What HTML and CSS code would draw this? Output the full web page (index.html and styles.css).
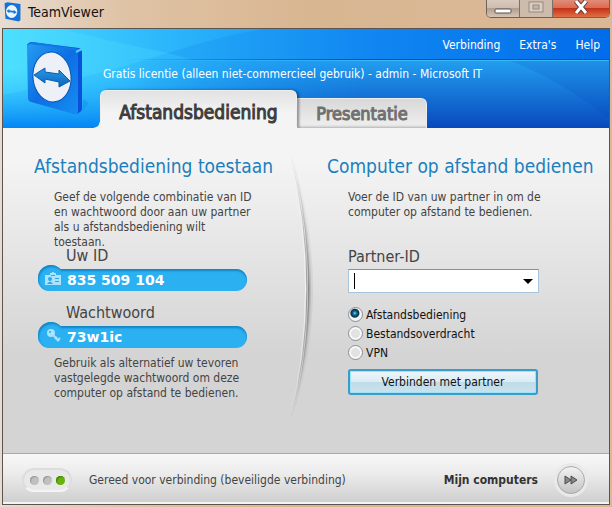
FILE: index.html
```
<!DOCTYPE html>
<html lang="nl">
<head>
    <meta charset="UTF-8">
    <title>TeamViewer</title>
    <link rel="stylesheet" href="styles.css">
</head>
<body>
    <div class="titlebar">
        <svg class="title-icon" viewBox="0 0 60 78" preserveAspectRatio="none">
            <path d="M2 5 L12 1 L58 8 V70 L52 76 L5 65 Z" fill="#1273dd"/>
            <ellipse cx="27" cy="37" rx="20" ry="25" fill="#eef4fb"/>
            <path d="M9 35 L19 27 V32 L34 35 V30 L45 41 L34 47 V42 L19 39 V44 Z" fill="#1779d0"/>
        </svg>
        <span class="title-text">TeamViewer</span>
        <div class="window-buttons">
            <button class="win-btn minimize" aria-label="Minimaliseren">
                <svg width="18" height="6"><rect x="1" y="1" width="16" height="4" rx="1" fill="#fff" stroke="#5b5250"/></svg>
            </button>
            <button class="win-btn maximize" aria-label="Maximaliseren" disabled>
                <svg width="16" height="12"><rect x="1" y="1" width="14" height="10" fill="#d9cdc2" stroke="#978a7f"/><rect x="5" y="4" width="6" height="4" fill="#c4b4a6" stroke="#978a7f"/></svg>
            </button>
            <button class="win-btn close" aria-label="Sluiten">
                <svg width="16" height="14"><path d="M3 1 L13 13 M13 1 L3 13" stroke="#5e3a38" stroke-width="5"/><path d="M3 1 L13 13 M13 1 L3 13" stroke="#fff" stroke-width="3"/></svg>
            </button>
        </div>
    </div>

    <div class="app">
        <header class="header">
            <svg class="header-bg" viewBox="0 0 606 99" preserveAspectRatio="none">
                <defs>
                    <linearGradient id="top-blue" x1="0" x2="1">
                        <stop offset="0" stop-color="#4bddff"/>
                        <stop offset=".28" stop-color="#2bb5fb"/>
                        <stop offset=".6" stop-color="#138af5"/>
                        <stop offset="1" stop-color="#0069ec"/>
                    </linearGradient>
                    <linearGradient id="low-blue" x1="0" x2="0" y1="0" y2="1">
                        <stop offset="0" stop-color="#239ff0"/>
                        <stop offset="1" stop-color="#0849bd"/>
                    </linearGradient>
                    <linearGradient id="low-left" x1="0" x2="0" y1="0" y2="1">
                        <stop offset="0" stop-color="#20adfa" stop-opacity="0"/>
                        <stop offset="1" stop-color="#0385f5"/>
                    </linearGradient>
                    <linearGradient id="fade" x1="0" x2="1">
                        <stop offset=".2" stop-color="#fff" stop-opacity="0"/>
                        <stop offset=".6" stop-color="#fff"/>
                    </linearGradient>
                    <mask id="fade-mask"><rect width="606" height="99" fill="url(#fade)"/></mask>
                </defs>
                <rect width="606" height="99" fill="url(#top-blue)"/>
                <rect y="40" width="606" height="59" fill="url(#low-left)"/>
                <path d="M0 0 H60 Q105 12 165 24 Q90 48 0 66 Z" fill="#5cecff" opacity=".2"/>
                <path d="M165 24 Q215 8 260 0 H606 V31 H190 Z" fill="#087be8" opacity=".2"/>
                <g mask="url(#fade-mask)">
                    <rect y="31" width="606" height="68" fill="url(#low-blue)"/>
                    <path d="M505 31 Q560 52 606 90 V31 Z" fill="#003bb4" opacity=".12"/>
                    <rect y="30" width="606" height="1" fill="#0048cf"/>
                    <rect y="31" width="606" height="1" fill="#37b8f7"/>
                </g>
            </svg>
            <svg class="logo" viewBox="0 0 66 80">
                <defs>
                    <linearGradient id="logo-face" x1="0" x2="1" y1="0" y2="1">
                        <stop offset="0" stop-color="#259cf0"/>
                        <stop offset=".5" stop-color="#0c6fe4"/>
                        <stop offset="1" stop-color="#168ef2"/>
                    </linearGradient>
                    <linearGradient id="logo-arrow" x1="0" x2="0" y1="0" y2="1">
                        <stop offset="0" stop-color="#2c98e4"/>
                        <stop offset="1" stop-color="#0965bf"/>
                    </linearGradient>
                </defs>
                <path d="M54 73 L57 69 V58 L63 62 Z" fill="#0967ba" opacity=".2"/>
                <path d="M1 5 Q1 2 5 1 L53 7 Q56 8 56 11 V68 Q56 70 54 71 L51 73 L47 73 Z" fill="#0a50dd"/>
                <path d="M2 3 L7 1 L54 8 L51 11 Z" fill="#1478e6"/>
                <path d="M1 6 Q1 3 4 3 L49 9 Q52 10 52 13 V70 Q52 74 48 73 L5 61 Q2 60 2 57 Z" fill="url(#logo-face)"/>
                <path d="M50 11 L56 8" stroke="#45d1ff" stroke-width="2"/>
                <ellipse cx="26" cy="36" rx="19" ry="25" transform="rotate(-6 26 36)" fill="#edf0f7" stroke="#0755b6"/>
                <path d="M8 34 L19 27 V31 L33 33 V29 L44 40 L33 46 V41 L19 38 V42 Z" fill="url(#logo-arrow)" stroke="#075eae"/>
            </svg>
            <nav class="menu">
                <a href="#">Verbinding</a>
                <a href="#">Extra's</a>
                <a href="#">Help</a>
            </nav>
            <p class="license">Gratis licentie (alleen niet-commercieel gebruik) - admin - Microsoft IT</p>
            <div class="tabs">
                <button class="tab active">Afstandsbediening</button>
                <button class="tab">Presentatie</button>
            </div>
        </header>

        <main class="content">
            <section class="panel allow">
                <h2>Afstandsbediening toestaan</h2>
                <p class="intro">Geef de volgende combinatie van ID<br>en wachtwoord door aan uw partner<br>als u afstandsbediening wilt<br>toestaan.</p>
                <div class="field-label">Uw ID</div>
                <div class="pill">
                    <svg class="pill-icon" viewBox="0 0 16 14">
                        <path d="M0 3 H5 V1 H7 V0 H9 V1 H11 V3 H16 V13 H0 Z" fill="#a8e3ff"/>
                        <circle cx="5" cy="7" r="2" fill="#32a6e8"/>
                        <path d="M2 12 Q5 7 8 12 Z M10 6 H14 V7 H10 Z M10 9 H14 V10 H10 Z M6 3 H10 V4 H6 Z" fill="#32a6e8"/>
                    </svg>
                    <span>835 509 104</span>
                </div>
                <div class="field-label">Wachtwoord</div>
                <div class="pill">
                    <svg class="pill-icon" viewBox="0 0 16 14">
                        <circle cx="6" cy="4" r="4" fill="#a8e3ff"/>
                        <circle cx="5" cy="3" r="1" fill="#32a6e8"/>
                        <path d="M8 6 L14 12 M10 10 L12 8 M12 12 L15 9" stroke="#a8e3ff" stroke-width="2"/>
                    </svg>
                    <span>73w1ic</span>
                </div>
                <p class="note">Gebruik als alternatief uw tevoren<br>vastgelegde wachtwoord om deze<br>computer op afstand te bedienen.</p>
            </section>

            <svg class="divider" viewBox="0 0 30 270" preserveAspectRatio="none">
                <defs>
                    <linearGradient id="arc-fade" x1="0" x2="0" y1="0" y2="1">
                        <stop offset="0" stop-color="#fff" stop-opacity="0"/>
                        <stop offset=".3" stop-color="#fff" stop-opacity=".6"/>
                        <stop offset=".52" stop-color="#fff"/>
                        <stop offset=".75" stop-color="#fff" stop-opacity=".6"/>
                        <stop offset="1" stop-color="#fff" stop-opacity="0"/>
                    </linearGradient>
                    <mask id="arc-mask" maskUnits="userSpaceOnUse" x="0" y="0" width="30" height="270">
                        <rect width="30" height="270" fill="url(#arc-fade)"/>
                    </mask>
                </defs>
                <g fill="none" mask="url(#arc-mask)">
                    <path d="M3 0 Q37 138 3 270 Q47 138 3 0" fill="#555" opacity=".1"/>
                    <path d="M3 0 Q37 138 3 270 Q43 138 3 0" fill="#555" opacity=".2"/>
                    <path d="M3 0 Q37 138 3 270 Q40 138 3 0" fill="#444" opacity=".4"/>
                    <path d="M2 0 Q36 138 2 270" stroke="#666" opacity=".6"/>
                    <path d="M1 0 Q34 138 1 270" stroke="#fff" opacity=".6"/>
                </g>
            </svg>

            <section class="panel control">
                <h2>Computer op afstand bedienen</h2>
                <p class="intro">Voer de ID van uw partner in om de<br>computer op afstand te bedienen.</p>
                <label class="field-label" for="partner-id">Partner-ID</label>
                <div class="combo">
                    <input type="text" id="partner-id">
                    <button class="combo-arrow" aria-label="Eerdere ID's">
                        <svg width="10" height="5"><path d="M0 0 H10 L5 5 Z"/></svg>
                    </button>
                </div>
                <div class="modes">
                    <label><input type="radio" name="mode" checked>Afstandsbediening</label>
                    <label><input type="radio" name="mode">Bestandsoverdracht</label>
                    <label><input type="radio" name="mode">VPN</label>
                </div>
                <button class="connect">Verbinden met partner</button>
            </section>
        </main>

        <footer class="statusbar">
            <div class="lights"><i></i><i></i><i class="on"></i></div>
            <span class="status-text">Gereed voor verbinding (beveiligde verbinding)</span>
            <label class="computers-label" for="computers">Mijn computers</label>
            <button class="computers" id="computers">
                <svg width="14" height="10" viewBox="0 0 14 10"><path d="M1 1 L7 5 L1 9 Z M7 1 L13 5 L7 9 Z" fill="#888" stroke="#4d4d4d"/></svg>
            </button>
        </footer>
    </div>
</body>
</html>
```
FILE: styles.css
```
* {
    margin: 0;
    padding: 0;
    box-sizing: border-box;
}

body {
    display: flex;
    flex-direction: column;
    min-height: 100vh;
    padding: 0 2px 2px;
    background: linear-gradient(90deg, #e8dcd2 0, #dfc3a5 20%, #d9b692 50%, #dbb997 100%);
    font-family: 'DejaVu Sans Condensed', 'DejaVu Sans', sans-serif;
    font-size: 12px;
    color: #444;
}

button {
    border: none;
    background: none;
    font: inherit;
    color: inherit;
}

a {
    color: inherit;
    text-decoration: none;
}

.titlebar {
    display: flex;
    align-items: flex-start;
    height: 28px;
    padding: 0 0 0 2px;
    color: #111;
}

.title-icon {
    width: 17px;
    height: 20px;
    margin-top: 2px;
}

.title-text {
    flex-grow: 1;
    margin-left: 7px;
    font-size: 14px;
    line-height: 25px;
}

.window-buttons {
    display: flex;
    height: 18px;
    border: 1px solid #6d625b;
    border-top: none;
    border-radius: 0 0 5px 5px;
    overflow: hidden;
}

.win-btn {
    display: flex;
    align-items: center;
    justify-content: center;
    width: 33px;
    border-right: 1px solid #7b6f67;
    background: linear-gradient(#d9cabe, #cdbbae 50%, #b39f90 50%, #d5c4b4);
}

.win-btn.minimize {
    padding-top: 4px;
}

.win-btn.maximize {
    padding-bottom: 3px;
    background: #cdbcac;
}

.win-btn.close {
    width: 56px;
    padding-bottom: 3px;
    border-right: none;
    background: linear-gradient(#e08d78, #d9694f 50%, #c53318 50%, #df7045);
}

.app {
    display: flex;
    flex-direction: column;
    flex-grow: 1;
    border: 1px solid #5b5450;
}

.header {
    position: relative;
    display: flex;
    flex-direction: column;
    height: 99px;
    color: #fff;
}

.header-bg {
    position: absolute;
    width: 100%;
    height: 100%;
}

.logo {
    position: absolute;
    left: 23px;
    top: 12px;
    width: 66px;
    height: 80px;
}

.menu {
    position: relative;
    display: flex;
    justify-content: flex-end;
    gap: 19px;
    padding-right: 9px;
    line-height: 32px;
}

.license {
    position: relative;
    padding-left: 100px;
    line-height: 26px;
}

.tabs {
    position: relative;
    display: flex;
    align-items: flex-end;
    margin-top: auto;
    padding-left: 97px;
}

/* curve where the page meets the left edge of the first tab */
.tabs::before {
    content: '';
    position: absolute;
    left: 91px;
    bottom: 0;
    width: 6px;
    height: 6px;
    background: radial-gradient(circle at 0 0, transparent 5px, #f4f4f4 6px);
}

.tab {
    width: 130px;
    height: 30px;
    border: 1px solid #eee;
    border-bottom: none;
    border-radius: 0 6px 0 0;
    background: linear-gradient(#d8d8d8, #f0f0f0);
    font-size: 19px;
    -webkit-text-stroke: 1px;
    color: #707070;
}

.tab:not(.active) {
    box-shadow: inset 0 -3px 3px -2px #aaa;
    font-size: 18px;
}

.tab.active {
    width: 197px;
    height: 38px;
    padding-top: 4px;
    border-radius: 6px 6px 0 0;
    background: linear-gradient(#e2e2e2, #f4f4f4 60%);
    box-shadow: 2px 0 3px rgba(0, 0, 0, 0.4);
    clip-path: inset(-4px -4px 0 0);
    color: #3d3d3d;
}

.content {
    position: relative;
    display: grid;
    grid-template-columns: 1fr 1fr;
    flex-grow: 1;
    background: linear-gradient(#f4f4f4 10%, #d4d4d4 70%);
}

.panel {
    display: flex;
    flex-direction: column;
    padding-top: 24px;
}

.panel h2 {
    font-size: 19px;
    font-weight: normal;
    line-height: 28px;
    white-space: nowrap;
    color: #1b7fbd;
}

.intro,
.note {
    line-height: 15px;
    white-space: nowrap;
}

.intro {
    height: 56px;
    margin-top: 10px;
    overflow: hidden;
}

.field-label {
    font-size: 16px;
    line-height: 20px;
}

.allow {
    padding-left: 31px;
}

.allow .intro,
.allow .note {
    margin-left: 20px;
}

.allow .field-label {
    margin-left: 32px;
}

.pill {
    position: relative;
    display: flex;
    align-items: center;
    width: 209px;
    height: 22px;
    margin: 3px 0 12px 4px;
    border-radius: 11px;
    background: #2bb0f2;
    box-shadow: inset 0 2px 2px #1586c5;
    font-family: 'DejaVu Sans', sans-serif;
    font-size: 14px;
    font-weight: bold;
    color: #fff;
}

.pill::before {
    content: '';
    position: absolute;
    left: 0;
    top: -4px;
    width: 26px;
    height: 26px;
    border-radius: 50%;
    background: #2bb0f2;
    box-shadow: inset 1px 2px 2px #1586c5;
    clip-path: polygon(0 0, 90% 0, 90% 30%, 70% 100%, 0 100%);
}

.pill-icon {
    position: relative;
    width: 16px;
    height: 14px;
    margin: 0 6px 2px 7px;
}

.note {
    margin-top: -4px;
}

.divider {
    position: absolute;
    left: 47%;
    top: 24px;
    width: 30px;
    height: 270px;
}

.control {
    padding-left: 21px;
}

.control > * {
    margin-left: 21px;
}

.control h2 {
    margin-left: 0;
}

.control .field-label {
    margin-top: 1px;
}

.combo {
    display: flex;
    width: 191px;
    height: 24px;
    margin-top: 2px;
    border: 1px solid #a9c3dc;
    border-top-color: #6f94b8;
    background: #fff;
}

.combo input {
    flex-grow: 1;
    min-width: 0;
    padding-left: 5px;
    border: none;
    outline: none;
    background: linear-gradient(#000, #000) 5px 50% / 1px 16px no-repeat;
    font: inherit;
}

.combo-arrow {
    display: flex;
    align-items: center;
    justify-content: center;
    width: 20px;
}

.modes {
    margin-top: 12px;
    color: #111;
}

.modes label {
    display: flex;
    align-items: center;
    gap: 3px;
    height: 19px;
}

.modes input {
    appearance: none;
    width: 15px;
    height: 15px;
    border: 1px solid #8b8f94;
    border-radius: 50%;
    background: radial-gradient(circle, #e2e2e2 0 4px, #f8f8f8 5px);
}

.modes input:checked {
    background: radial-gradient(circle at 45% 40%, #7cd5ef 0, #146188 2px, #0a2f4c 4px, #f4f4f4 5px);
}

.connect {
    width: 190px;
    height: 26px;
    margin-top: 7px;
    border: 2px solid #3a9cc9;
    border-radius: 3px;
    background: linear-gradient(#eef6fa, #dcebf3 50%, #c0dbe8 50%, #cbe2ec);
    box-shadow: inset 0 0 0 1px #9fe3f8;
    color: #111;
}

.statusbar {
    display: flex;
    align-items: center;
    height: 51px;
    padding: 4px 24px 0 19px;
    border-top: 1px solid #aaa;
    border-bottom: 2px solid #f4f4f4;
    background: linear-gradient(#f8f8f8, #ececec 40%, #cfcfcf);
}

.lights {
    display: flex;
    align-items: center;
    justify-content: center;
    gap: 4px;
    width: 50px;
    height: 24px;
    border: 2px solid #ddd;
    border-bottom-color: #f4f4f4;
    border-radius: 12px;
    background: #e9e9e9;
}

.lights i {
    width: 9px;
    height: 9px;
    border-radius: 50%;
    background: #c0c0c0;
    box-shadow: inset 1px 1px 1px #999;
}

.lights .on {
    background: #67b20c;
    box-shadow: inset 1px 1px 1px #3f8203;
}

.status-text {
    flex-grow: 1;
    margin-left: 17px;
}

.computers-label {
    font-weight: bold;
    color: #333;
}

.computers {
    display: flex;
    align-items: center;
    justify-content: center;
    width: 28px;
    height: 28px;
    margin-left: 19px;
    border: 1px solid #aaa;
    border-radius: 50%;
    background: linear-gradient(#f2f2f2, #c4c4c4);
    box-shadow: 0 0 0 3px #e9e9e9;
}
```
